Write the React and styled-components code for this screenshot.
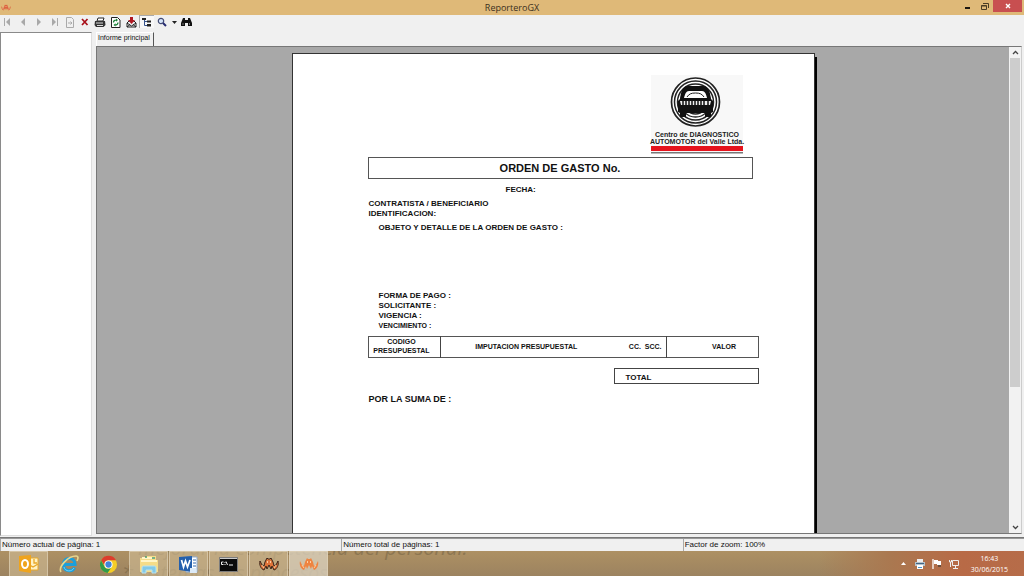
import React from "react";
import styled, { createGlobalStyle } from "styled-components";

const Global = createGlobalStyle`
  * { box-sizing: border-box; }
  body { margin: 0; font-family: "Liberation Sans", Arial, sans-serif; color: #111; }
  button { font: inherit; color: inherit; border: 0; padding: 0; background: none; }
  svg { display: block; }
`;

const Desktop = styled.div`
  display: flex;
  flex-direction: column;
  height: 100vh;
  overflow: hidden;
  background: #f0f0f0;
`;

const TitleBar = styled.header`
  display: grid;
  grid-template-columns: 1fr auto 1fr;
  flex: none;
  height: 15px;
  background: #dfb978;
`;
const AppMark = styled.div`
  padding: 4px 0 0 1px;
`;
const Title = styled.h1`
  margin: 0;
  font: 400 9px/15px "Open Sans", sans-serif;
  color: #3b3020;
`;
const WindowButtons = styled.div`
  display: flex;
  justify-content: flex-end;
  padding-right: 2px;
`;
const WindowButton = styled.button`
  display: grid;
  place-items: center;
  width: ${(p) => (p.$close ? 29 : 17)}px;
  height: ${(p) => (p.$close ? 12 : 13)}px;
  background: ${(p) => (p.$close ? "#c84f50" : "transparent")};
`;

const Toolbar = styled.div`
  display: flex;
  flex: none;
  align-items: center;
  justify-content: space-between;
  width: 194px;
  height: 16px;
  padding-bottom: 3px;
`;
const Tool = styled.button`
  display: grid;
  place-items: center;
  width: ${(p) => (p.$narrow ? 9 : 15)}px;
  height: 13px;
  background: ${(p) => (p.$pressed ? "#f8f8f8" : "transparent")};
  border-top: 1px solid ${(p) => (p.$pressed ? "#aaa" : "transparent")};
  border-left: 1px solid ${(p) => (p.$pressed ? "#aaa" : "transparent")};
`;

const Body = styled.main`
  display: flex;
  flex: 1;
  min-height: 0;
  gap: 4px;
  padding-right: 2px;
  border-bottom: 1px solid #777;
`;
const TreePane = styled.aside`
  width: 92px;
  margin: 1px 0 1px;
  background: #fff;
  border: 1px solid #8a8a8a;
  border-right-color: #ddd;
  border-bottom-color: #ddd;
`;
const Report = styled.section`
  display: flex;
  flex: 1;
  flex-direction: column;
  min-width: 0;
`;
const Tab = styled.button`
  align-self: flex-start;
  height: 14px;
  margin-top: 1px;
  padding: 0 3px 3px 1px;
  font-size: 7px;
  line-height: 10px;
  border-top: 1px solid #fff;
  border-left: 1px solid #fff;
  border-right: 1px solid #555;
`;
const Viewer = styled.div`
  display: flex;
  flex: 1;
  min-height: 0;
  margin-bottom: 3px;
  border: 1px solid #777;
  border-right-color: #ccc;
`;
const Canvas = styled.div`
  display: flex;
  flex: 1;
  justify-content: center;
  padding-top: 6px;
  overflow: hidden;
  background: #a8a8a8;
`;
const ScrollBar = styled.div`
  display: flex;
  flex-direction: column;
  width: 12px;
  background: #f2f2f2;
`;
const ScrollButton = styled.button`
  display: grid;
  flex: none;
  place-items: center;
  height: 11px;
`;
const ScrollTrack = styled.div`
  flex: 1;
  padding: 0 1px;
`;
const ScrollThumb = styled.div`
  height: 71%;
  background: #cdcdcd;
`;

const Paper = styled.article`
  display: flex;
  flex-direction: column;
  width: 523px;
  padding: 21px 55px 0 75px;
  background: #fff;
  border: 1px solid #333;
  border-bottom: 0;
  box-shadow: 2px 4px 0 #000;
  font-weight: 700;
`;
const LogoBox = styled.div`
  align-self: flex-end;
  width: 92px;
  margin-right: 16px;
`;
const OrderTitle = styled.h2`
  width: 385px;
  margin: 4px 0 6px;
  border: 1px solid #555;
  font-size: 11px;
  line-height: 20px;
  text-align: center;
`;
const Line = styled.div`
  flex: none;
  padding-left: ${(p) => p.$indent || 1}px;
  margin-bottom: ${(p) => p.$gap || 0}px;
  font-size: ${(p) => p.$size || 8}px;
  line-height: 10px;
  white-space: pre;
`;
const Budget = styled.table`
  flex: none;
  width: 390px;
  height: 22px;
  border-collapse: collapse;
  table-layout: fixed;
  border: 1px solid #555;
`;
const Head = styled.th`
  width: ${(p) => p.$w}px;
  padding: ${(p) => p.$pad || "0"};
  border-right: ${(p) => (p.$rule ? "1px solid #444" : "0")};
  font-size: 7px;
  line-height: 9px;
  text-align: ${(p) => p.$align || "center"};
  white-space: pre;
`;
const Total = styled.div`
  flex: none;
  width: 145px;
  height: 16px;
  margin: 10px 0 10px 246px;
  padding: 2px 0 0 11px;
  border: 1px solid #444;
  font-size: 8px;
  line-height: 14px;
`;

const StatusBar = styled.footer`
  display: grid;
  grid-template-columns: 1fr 1fr 1fr;
  flex: none;
  height: 13px;
  border-top: 1px solid #999;
`;
const Status = styled.div`
  padding-left: 1px;
  border-left: 1px solid #aaa;
  font-size: 8px;
  line-height: 12px;
`;

const TaskBar = styled.nav`
  position: relative;
  display: flex;
  flex: none;
  height: 25px;
  overflow: hidden;
  padding-left: 9px;
  background:
    linear-gradient(90deg, transparent 80%, #aa7850 87%, #b86a46 94%, #b66c49),
    linear-gradient(#ad9063, #9c8360);
`;
const Ghost = styled.div`
  position: absolute;
  top: -16px;
  left: 138px;
  color: #806c4b;
  font: italic 20px/25px "Open Sans", sans-serif;
  white-space: pre;
  opacity: 0.7;
`;
const GhostLine = styled.div`
  margin-left: ${(p) => p.$outdent || 0}px;
`;
const Task = styled.button`
  position: relative;
  display: grid;
  place-items: center;
  flex: none;
  width: 39px;
  margin-right: 1px;
  background: ${(p) =>
    p.$active ? "rgba(218,208,187,.8)" : p.$open ? "rgba(205,184,146,.65)" : "transparent"};
  border: 1px solid ${(p) => (p.$open || p.$active ? "rgba(225,211,184,.65)" : "transparent")};
  border-bottom: 0;
`;
const Tray = styled.div`
  position: relative;
  display: flex;
  align-items: center;
  margin-left: auto;
  padding-right: 16px;
  color: #fff;
`;
const TrayButton = styled.button`
  display: grid;
  place-items: center;
  width: 17px;
  height: 18px;
`;
const Clock = styled.time`
  margin-left: 8px;
  font: 7px/11px "Open Sans", sans-serif;
  text-align: center;
`;

const Step = ({ dir, bar }) => (
  <svg width="10" height="10" viewBox="0 0 10 10" fill="#a9a9a9">
    <g transform={dir === "next" ? "rotate(180 5 5)" : undefined}>
      <path d="M7 1v8L3 5z" />
      {bar && <path d="M1 1h1v8H1z" />}
    </g>
  </svg>
);

const GotoPage = () => (
  <svg width="10" height="11" viewBox="0 0 10 11" fill="none" stroke="#aaa">
    <path d="M1.500 .5h5l2 2v8h-7zM3 6h4M5.500 4.500L7 6 5.500 7.500" />
  </svg>
);
const Cross = () => (
  <svg width="8" height="8" viewBox="0 0 8 8" stroke="#a80e18" strokeWidth="1.700">
    <path d="M1 1l5.500 6M6.500 1L1 7" />
  </svg>
);
const Printer = () => (
  <svg width="12" height="11" viewBox="0 0 12 11">
    <path d="M3 4l1-3h6L9 4z" fill="#fff" stroke="#222" />
    <path d="M1 4h10l.5 4-2 2H2L.5 8z" fill="#333" />
    <path d="M2 6h7M3 8.500h6" stroke="#ddd" />
  </svg>
);
const Refresh = () => (
  <svg width="10" height="11" viewBox="0 0 10 11">
    <path d="M.5.5h6l2.500 2.500v7.500H.5z" fill="#fff" stroke="#222" />
    <path d="M2.500 5.500c0-2 1-2.500 3-2.500M7 5.500c0 2-1 2.500-3 2.500" fill="none" stroke="#188238" strokeWidth="1.200" />
    <path d="M5 1.500L7 3 5 4.700zM4.500 6.300L2.500 8l2 1.600z" fill="#188238" />
  </svg>
);
const Export = () => (
  <svg width="11" height="11" viewBox="0 0 11 11">
    <path d="M1 6l2-2h5l2 2v4H1z" fill="#eee" stroke="#222" />
    <path d="M1 6l4.500 3L10 6M1 10l3-2.500M10 10L7 7.500" fill="none" stroke="#222" />
    <path d="M4 0h3v3h2L5.500 7 2 3h2z" fill="#b01822" />
  </svg>
);
const Tree = () => (
  <svg width="11" height="10" viewBox="0 0 11 10">
    <path d="M1 1h4v2H1zM6 3.500h4v2H6zM6 7h4v2.500H6z" fill="#222" />
    <path d="M3.500 3v5.500H6M3.500 4.500H6" fill="none" stroke="#35528c" />
  </svg>
);
const Magnifier = () => (
  <svg width="10" height="10" viewBox="0 0 10 10">
    <circle cx="4" cy="4" r="2.700" fill="#d6e5fa" stroke="#424a72" strokeWidth="1.200" />
    <path d="M6 6l3 3" stroke="#272d72" strokeWidth="2" />
  </svg>
);
const Binoculars = () => (
  <svg width="11" height="10" viewBox="0 0 11 10" fill="#111">
    <path d="M2 1h2v2h3V1h2l2 5v3H7V6H4v3H0V6z" />
    <path d="M1.500 7h1M8 7h1" stroke="#ddd" />
  </svg>
);
const Triangle = ({ up, color = "#222" }) => (
  <svg width="5" height="3" viewBox="0 0 5 3" fill={color}>
    <path d={up ? "M0 3h5L2.500 0z" : "M0 0h5L2.500 3z"} />
  </svg>
);
const Chevron = ({ up }) => (
  <svg width="7" height="5" viewBox="0 0 7 5" fill="none" stroke="#444" strokeWidth="1.300">
    <path d={up ? "M1 4l2.500-2.500L6 4" : "M1 1l2.500 2.500L6 1"} />
  </svg>
);

const Monogram = ({ size = 20, color = "#ef8440", edge = "none" }) => (
  <svg width={size} height={size * 0.7} viewBox="0 0 20 14">
    <path
      d="M1 4C0 8 2 12 5 13L7 9l1 3 2-4 2 4 1-3 2 4c3-1 5-5 4-9l-2 4-2 1-1-4-2-4-1 1H9L8 1 6 5 5 9 3 8z"
      fill={color}
      stroke={edge}
      strokeWidth="1"
    />
    <path d="M3 8l2 3M17 8l-2 3M8.500 4v2M11.500 4v2" stroke="#ffe2bd" strokeWidth=".8" />
  </svg>
);

const CompanyLogo = () => (
  <svg width="92" height="78" viewBox="0 0 92 78" role="img" overflow="visible">
    <path d="M0 0h92v78H0z" fill="#f8f8f8" />
    <g fill="none" stroke="#222">
      <circle cx="44.500" cy="27" r="24" fill="#fff" strokeWidth="1.700" />
      <circle cx="44.500" cy="27" r="21" strokeWidth="1.500" />
      <circle cx="44.500" cy="27" r="18" strokeWidth="1.500" />
      <circle cx="44.500" cy="27" r="15" strokeWidth="1.300" />
      <circle cx="44.500" cy="27" r="12" strokeWidth="1.300" />
    </g>
    <path
      d="M29 24c1-8 3-13 8-13h15c5 0 7 5 8 13l2 2v11l-2 1v4h-6v-4H35v4h-6v-4l-2-1V26z"
      fill="#111"
    />
    <path d="M33 23c1-4 2-7 5-7h13c3 0 4 3 5 7z" fill="#fff" />
    <path d="M36 22c2-3 4-4 8.500-4s6.500 1 8.500 4" fill="none" stroke="#222" />
    <path d="M29 26h31l-1 4H30z" fill="#eee" />
    <path d="M32 26v4M35 26v4M38 26v4M41 26v4M44 26v4M47 26v4M50 26v4M53 26v4M57 26v4" stroke="#111" strokeWidth="1.500" />
    <g fontFamily="Liberation Sans, Arial, sans-serif" fontSize="7" fontWeight="700" fill="#222" textAnchor="middle">
      <text x="46" y="62">Centro de DIAGNOSTICO</text>
      <text x="46" y="69">AUTOMOTOR del Valle Ltda.</text>
    </g>
    <path d="M0 71h92v5H0z" fill="#e5131c" />
    <path d="M0 77h92v1.500H0z" fill="#777" />
  </svg>
);

const Outlook = () => (
  <svg width="20" height="20" viewBox="0 0 20 20">
    <path d="M9 4h10v12H9z" fill="#fff2c4" stroke="#e8a828" />
    <path d="M9 10l5 3 5-3M15 5v4h3" fill="none" stroke="#e8a828" strokeWidth="1.300" />
    <path d="M0 2l12-1v18L0 17z" fill="#efa41d" />
    <ellipse cx="6" cy="10" rx="3" ry="4" fill="none" stroke="#fff" strokeWidth="2" />
  </svg>
);
const Explorer = () => (
  <svg width="20" height="20" viewBox="0 0 20 20" fill="none">
    <path d="M15.500 13.500c-2 5-11 4-11-3 0-8 11.500-8 11.500 0H5.500" stroke="#1b9fdb" strokeWidth="3.200" />
    <path d="M15 14c-2 4-9 4-10-1" stroke="#72d4f7" strokeWidth="1" />
    <path d="M2 18C-1 13 9 2 17 2c3 0 2 3 1 5" stroke="#e8d68d" strokeWidth="1.600" />
  </svg>
);
const Chrome = () => (
  <svg width="19" height="19" viewBox="0 0 20 20">
    <circle cx="10" cy="10" r="9" fill="#f5cd27" />
    <path d="M2.200 5.500A9 9 0 0 1 18 5.500h-8a4.500 4.500 0 0 0-4 6z" fill="#dc3d2d" />
    <path d="M2.200 5.500A9 9 0 0 0 9 19l4.500-6.500a4.500 4.500 0 0 1-7.500 0z" fill="#319b4a" />
    <circle cx="10" cy="10" r="4.300" fill="#fff" />
    <circle cx="10" cy="10" r="3.300" fill="#4284d9" />
  </svg>
);
const Folder = () => (
  <svg width="20" height="19" viewBox="0 0 20 19">
    <path d="M1 3h5l1-2h10v4h2v12H1z" fill="#f5dc88" />
    <path d="M3 3h13M2 6h16" stroke="#fff5c7" strokeWidth="2" />
    <path d="M6 2h2M13 3h3" stroke="#4a9b70" strokeWidth="1.500" />
    <path d="M3 18v-5c0-2 1-2 3-2h8c2 0 3 0 3 2v5h-4v-3H7v3z" fill="#82c9e7" stroke="#b8e3f2" />
  </svg>
);
const Word = () => (
  <svg width="19" height="19" viewBox="0 0 19 19">
    <path d="M7 2h11v15H7z" fill="#fff" stroke="#90add1" />
    <path d="M14 5h3M14 8h3M14 11h3" stroke="#2e66ae" />
    <path d="M0 2l13-1v16L0 15z" fill="#2460ad" />
    <path d="M2.500 5l2 7L6.500 6l2 6 2.500-7" fill="none" stroke="#fff" strokeWidth="1.700" />
    <path d="M11 13h6l1 5h-7z" fill="#dceaf7" />
  </svg>
);
const Console = () => (
  <svg width="19" height="15" viewBox="0 0 19 15">
    <path d="M.5.5h18v14H.5z" fill="#0a0a0a" stroke="#7d7d7d" />
    <path d="M1 1h17v1H1z" fill="#ccc" />
    <path d="M4.500 5H2.500v2.500h2M6 5v1M6 7v1M7 4.500L8.500 8M10 8h4" fill="none" stroke="#eee" />
  </svg>
);
const TrayPrinter = () => (
  <svg width="10" height="10" viewBox="0 0 10 10">
    <path d="M2 0h6v4H2z" fill="#eee" />
    <path d="M0 3h10v4H0z" fill="#b6c2ca" />
    <path d="M1 4h8v1H1z" fill="#416584" />
    <path d="M2 6h6v4H2z" fill="#fff" />
    <path d="M3 8h4v1H3z" fill="#4a93c6" />
  </svg>
);
const Flag = () => (
  <svg width="10" height="10" viewBox="0 0 10 10">
    <path d="M1 0v10" stroke="#fff" strokeWidth="1.300" />
    <path d="M2 1h4v1h3v4H5V5H2z" fill="#fff" />
    <path d="M6 7h3" stroke="#413b34" strokeWidth="1.300" />
  </svg>
);
const Network = () => (
  <svg width="10" height="10" viewBox="0 0 10 10" fill="none" stroke="#eee">
    <path d="M3.500 1.500h6v5h-6zM4 9.500h5M6.500 7v2M.5 1v2h2V1M1.500 3v5" />
  </svg>
);
const Minimize = () => (
  <svg width="7" height="7" viewBox="0 0 7 7">
    <path d="M1 4h5v2H1z" fill="#1d1710" />
  </svg>
);
const Restore = () => (
  <svg width="8" height="8" viewBox="0 0 8 8" fill="none" stroke="#4a3c25">
    <path d="M.5 2.500h5v4h-5zM2 .5h5.500V5M.5 3h5" />
  </svg>
);
const Close = () => (
  <svg width="6" height="6" viewBox="0 0 6 6" stroke="#fff" strokeWidth="1.400">
    <path d="M1 1l4 4M5 1L1 5" />
  </svg>
);

const tools = [
  ["Primera página", <Step bar />],
  ["Página anterior", <Step />],
  ["Página siguiente", <Step dir="next" />],
  ["Última página", <Step dir="next" bar />],
  ["Ir a página", <GotoPage />],
  ["Cerrar vista", <Cross />],
  ["Imprimir", <Printer />],
  ["Actualizar", <Refresh />],
  ["Exportar", <Export />],
  ["Árbol de grupos", <Tree />, { $pressed: true }],
  ["Zoom", <Magnifier />],
  ["Niveles de zoom", <Triangle />, { $narrow: true }],
  ["Buscar", <Binoculars />],
];

const tasks = [
  ["Outlook", <Outlook />, { $open: true }],
  ["Internet Explorer", <Explorer />],
  ["Chrome", <Chrome />],
  ["Explorador de archivos", <Folder />, { $open: true }],
  ["Word", <Word />, { $open: true }],
  ["Símbolo del sistema", <Console />, { $open: true }],
  ["GX", <Monogram edge="#3b2419" color="#e0743a" />, { $open: true }],
  ["ReporteroGX", <Monogram />, { $active: true }],
];

export default function App() {
  return (
    <Desktop>
      <Global />
      <TitleBar>
        <AppMark><Monogram size={10} color="#dc6540" /></AppMark>
        <Title>ReporteroGX</Title>
        <WindowButtons>
          <WindowButton aria-label="Minimizar"><Minimize /></WindowButton>
          <WindowButton aria-label="Restaurar"><Restore /></WindowButton>
          <WindowButton aria-label="Cerrar" $close><Close /></WindowButton>
        </WindowButtons>
      </TitleBar>
      <Toolbar role="toolbar">
        {tools.map(([label, icon, props]) => (
          <Tool key={label} aria-label={label} {...props}>{icon}</Tool>
        ))}
      </Toolbar>
      <Body>
        <TreePane />
        <Report>
          <Tab>Informe principal</Tab>
          <Viewer>
            <Canvas>
              <Paper>
                <LogoBox><CompanyLogo /></LogoBox>
                <OrderTitle>ORDEN DE GASTO No.</OrderTitle>
                <Line $indent={138} $gap={4}>FECHA:</Line>
                <Line>CONTRATISTA / BENEFICIARIO</Line>
                <Line $gap={4}>IDENTIFICACION:</Line>
                <Line $indent={11} $gap={58}>OBJETO Y DETALLE DE LA ORDEN DE GASTO :</Line>
                <Line $indent={11}>FORMA DE PAGO :</Line>
                <Line $indent={11}>SOLICITANTE :</Line>
                <Line $indent={11}>VIGENCIA :</Line>
                <Line $indent={11} $size={7} $gap={5}>VENCIMIENTO :</Line>
                <Budget>
                  <thead>
                    <tr>
                      <Head $w={72} $rule $pad="0 5px 2px 0">{"CODIGO\nPRESUPUESTAL"}</Head>
                      <Head $w={172} $pad="0 0 2px">IMPUTACION PRESUPUESTAL</Head>
                      <Head $w={54} $rule $align="right" $pad="0 4px 2px 0">CC.  SCC.</Head>
                      <Head $w={92} $pad="0 0 2px 24px">VALOR</Head>
                    </tr>
                  </thead>
                </Budget>
                <Total>TOTAL</Total>
                <Line $size={9}>POR LA SUMA DE :</Line>
              </Paper>
            </Canvas>
            <ScrollBar>
              <ScrollButton aria-label="Subir"><Chevron up /></ScrollButton>
              <ScrollTrack><ScrollThumb /></ScrollTrack>
              <ScrollButton aria-label="Bajar"><Chevron /></ScrollButton>
            </ScrollBar>
          </Viewer>
        </Report>
      </Body>
      <StatusBar>
        <Status>Número actual de página: 1</Status>
        <Status>Número total de páginas: 1</Status>
        <Status>Factor de zoom: 100%</Status>
      </StatusBar>
      <TaskBar>
        <Ghost aria-hidden="true">
          <GhostLine>mejorar la competencia del personal.</GhostLine>
          <GhostLine $outdent={-16}>* sistemas los procesos</GhostLine>
        </Ghost>
        {tasks.map(([label, icon, props]) => (
          <Task key={label} aria-label={label} {...props}>{icon}</Task>
        ))}
        <Tray>
          <TrayButton aria-label="Iconos ocultos"><Triangle up color="#fff" /></TrayButton>
          <TrayButton aria-label="Impresora"><TrayPrinter /></TrayButton>
          <TrayButton aria-label="Notificaciones"><Flag /></TrayButton>
          <TrayButton aria-label="Red"><Network /></TrayButton>
          <Clock dateTime="2015-06-30T16:43">16:43<br />30/06/2015</Clock>
        </Tray>
      </TaskBar>
    </Desktop>
  );
}
